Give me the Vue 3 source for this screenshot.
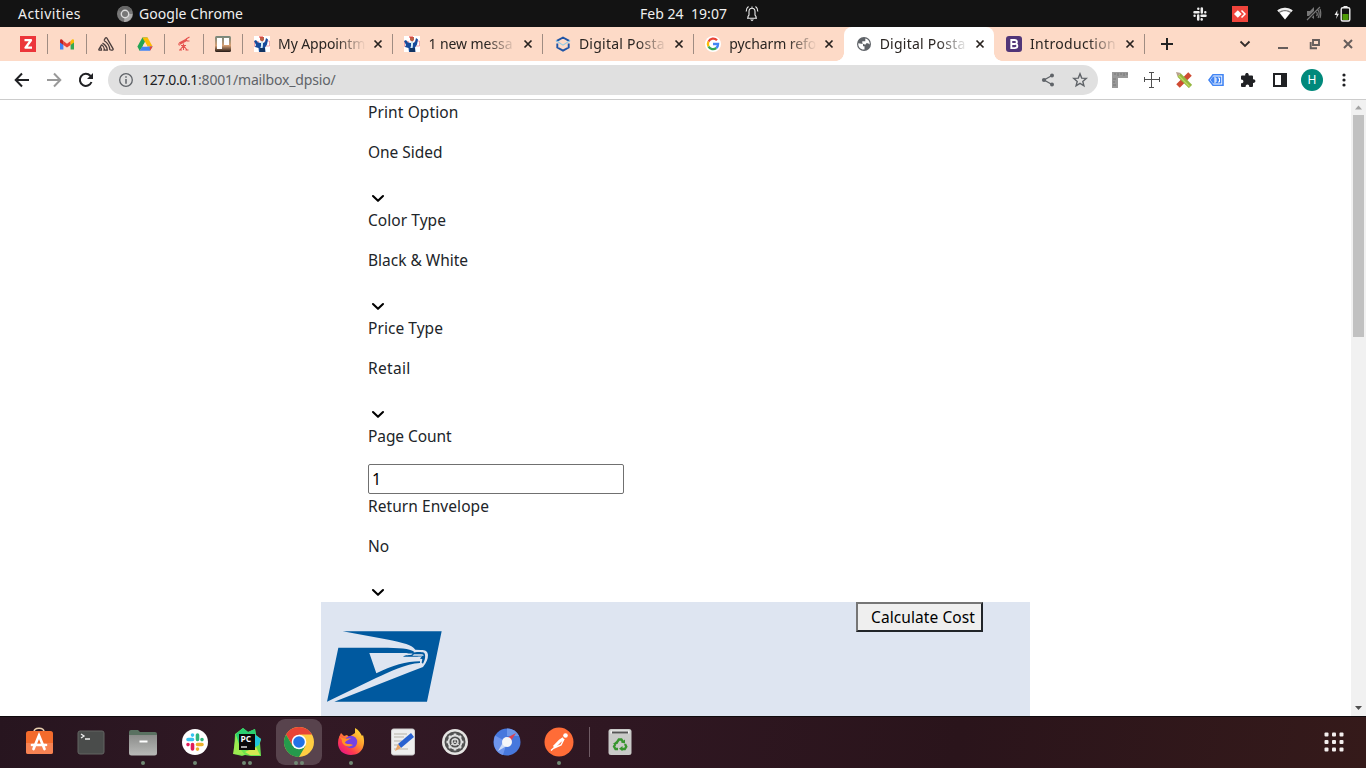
<script setup>
const pinned = ['z', 'gmail', 'sentry', 'drive', 'scope', 'trello']
const tabs = [
  { icon: 'eagle', text: 'My Appointm', w: 87 },
  { icon: 'eagle', text: '1 new messa', w: 84 },
  { icon: 'hex', text: 'Digital Posta', w: 86 },
  { icon: 'google', text: 'pycharm refo', w: 87 },
  { icon: 'globe', text: 'Digital Posta', w: 86, active: true },
  { icon: 'boot', text: 'Introduction', w: 86 },
]
const fields = [
  { label: 'Print Option', lw: 90.5, value: 'One Sided', vw: 74.5 },
  { label: 'Color Type', lw: 78, value: 'Black & White', vw: 100 },
  { label: 'Price Type', lw: 75, value: 'Retail', vw: 42.5 },
  { label: 'Page Count', lw: 83.5, input: '1' },
  { label: 'Return Envelope', lw: 121, value: 'No', vw: 21 },
]
const dock = [
  { id: 'store', dots: 0 }, { id: 'term', dots: 0 }, { id: 'files', dots: 1 }, { id: 'slack', dots: 1 },
  { id: 'pycharm', dots: 2 }, { id: 'chrome', dots: 2 }, { id: 'firefox', dots: 1 }, { id: 'editor', dots: 0 },
  { id: 'settings', dots: 0 }, { id: 'chromium', dots: 0 }, { id: 'postman', dots: 1 },
]
// Spreads a label's letters so that it fills the width it is given.
const vFit = {
  mounted(el, { value }) {
    const natural = el.getBoundingClientRect().width
    el.style.letterSpacing = (value - natural) / el.textContent.length + 'px'
  },
}
const teeth = [0, 45, 90, 135, 180, 225, 270, 315]
</script>

<template>
  <div class="screen">
    <header class="topbar">
      <span class="activities"><span v-fit="63">Activities</span></span>
      <svg class="app-ico" width="16" height="16" viewBox="0 0 16 16"><circle cx="8" cy="8" r="8" fill="#777"/><path d="M8 8 1 4A8 8 0 0 1 15 4z" fill="#666"/><path d="M8 8H15.5A8 8 0 0 1 7 16z" fill="#aaa"/><circle cx="8" cy="8" r="4.4" fill="#ddd"/><circle cx="8" cy="8" r="3" fill="#777"/></svg>
      <span class="app-name"><span v-fit="104">Google Chrome</span></span>
      <span class="clock"><span v-fit="87">Feb 24&nbsp; 19:07</span></span>
      <svg class="bell" width="14" height="17" viewBox="0 0 14 17" fill="none" stroke="#eee" stroke-width="1.1"><path d="M2 13.2h10M3 13V11.5L4 10V6.5C4 4.5 5 3.2 7 3.2s3 1.3 3 3.3V10l1 1.500V13M7 3V1.500M3.500 1.500C1.700 2.700 1.200 4.500 1.200 6.500M10.500 1.500c1.800 1.200 2.300 3 2.300 5"/><path d="M5 14.500h4L7 16.300z" fill="#eee" stroke="none"/></svg>
      <div class="tray">
        <svg width="14" height="14" viewBox="0 0 14 14" stroke="#eee" stroke-width="2.500" stroke-linecap="round"><path d="M5.300 1.700v.1M1.500 5.200h4M8.800 1.500v4M12.300 5.200v.1M8.700 12.300v.1M8.500 8.800h4M5.200 8.500v4M1.600 8.700v.1"/></svg>
        <svg class="t-any" width="16" height="16" viewBox="0 0 16 16"><path d="M0 0h16v16H0z" fill="#ef443b"/><path d="M5.800 4.200 9.600 8l-3.800 3.800L2 8z" fill="#fff"/><path d="m9.500 4.500 3.500 3.500-3.500 3.500" fill="none" stroke="#fff" stroke-width="1.500"/></svg>
        <svg class="t-wifi" width="16" height="13" viewBox="0 0 16 13"><path d="M.3 3.500C4.800-.3 11.200-.3 15.700 3.500L8 12.500z" fill="#777"/><path d="M.3 3.500C4.800-.3 11.200-.3 15.700 3.500L14.300 5.100C10.500 2.200 5.500 2.200 1.700 5.100z" fill="#eee"/><path d="M2.700 5.700C6 3.600 10 3.600 13.300 5.700L8 12.500z" fill="#fff"/></svg>
        <svg class="t-mute" width="16" height="15" viewBox="0 0 16 15"><path d="M1 5h3l4-4v12L4 10H1z" fill="#777"/><path d="M1 14 14 1" stroke="#131313" stroke-width="3"/><path d="M1 14 14 1M10.500 6c.9 1.300.9 3 0 4M12 4c1.500 2.500 1.500 5.500 0 8M14 3c1 3 1 6 0 9" fill="none" stroke="#777" stroke-width="1.200"/></svg>
        <svg class="t-bat" width="17" height="16" viewBox="0 0 17 16"><path d="m3.500 4-3 5h2.300L2 13l3-5.200H3.200z" fill="#eee"/><path d="M9.500 0h4v2h-4z" fill="#eee"/><rect x="7.200" y="1.700" width="8.600" height="13.300" rx="1.500" fill="none" stroke="#eee" stroke-width="1.400"/><path d="M8.500 8h6v6h-6z" fill="#4e9a06"/></svg>
      </div>
    </header>

    <nav class="tabstrip">
      <div v-for="p in pinned" :key="p" class="pin">
        <svg width="16" height="16" viewBox="0 0 16 16">
          <g v-if="p === 'z'"><path d="M0 0h16v16H0z" fill="#ec363b"/><path d="M4.500 4.200H11L5.500 11.700H12" fill="none" stroke="#fff" stroke-width="2.300" stroke-linejoin="round"/></g>
          <g v-else-if="p === 'gmail'"><path d="M1 4v9.500h3.400V7z" fill="#4285f4"/><path d="M11.600 7v6.500H15V4z" fill="#34a853"/><path d="M4.400 5v4L8 11.500 11.600 9V5L8 7.700z" fill="#ea4335"/><path d="M1 4.500v2l3.400 2.500V5L3 3.500Q1.200 2.700 1 4.500z" fill="#c5221f"/><path d="M15 4.500v2l-3.400 2.500V5L13 3.500q1.800-.8 2 1z" fill="#fbbc04"/></g>
          <g v-else-if="p === 'sentry'" fill="none" stroke="#493d3c" stroke-width="1.300"><path d="M6 4.500 7.300 2.200q.8-1 1.600 0l6.200 10.600q.3 1.200-.8 1.300H12.500M6 4.500q5.500 3.400 6 9.600M4.500 7.100q4.500 2.700 4.800 7H5.300M3.700 8.700l-2.900 4.700q-.1.700.7.700h2q.1-1.700-1.200-2.900M3.700 8.700q2.500 1.600 2.800 4.900"/></g>
          <g v-else-if="p === 'drive'"><path d="M5.400 1.500h5.200L5.300 11 2.700 15 .4 10.500z" fill="#23a455"/><path d="M5.400 1.500h5.200L15.600 10.500H10.500z" fill="#fbbc04"/><path d="M5.300 10.500h10.300L13 14.800H2.700z" fill="#4285f4"/><path d="m8 6 2.500 4.500h-5z" fill="#ffdfcd"/><path d="M12.600 10.500h3L13 14.800z" fill="#ea4335"/></g>
          <g v-else-if="p === 'scope'" stroke="#e5534f" fill="none"><path d="m3.500 7.700 7.500-4" stroke-width="2.600"/><path d="m10 3 3.500-2M11 5h2.500M2.500 7.500l1 2M7.500 7.500V14M7.500 9.500 4 14M7.500 9.500 11 14M3 14h3M9.500 14H12.500M5 9.500h5" stroke-width="1.100"/></g>
          <g v-else><defs><linearGradient id="trello" x2="0" y2="1"><stop offset="0" stop-color="#73877d"/><stop offset=".6" stop-color="#d49e72"/><stop offset="1" stop-color="#221815"/></linearGradient></defs><rect width="16" height="16" rx="1.500" fill="url(#trello)"/><path d="M2 2h5v11H2zM9 2h5v7H9z" fill="#fff"/></g>
        </svg>
      </div>
      <div v-for="(t, i) in tabs" :key="i" class="tab" :class="{ active: t.active, nosep: i === 3 || i === 4 }">
        <svg class="tab-ico" width="16" height="16" viewBox="0 0 16 16">
          <g v-if="t.icon === 'eagle'"><path d="M0 0h16v16H0z" fill="#fff"/><path d="M.5 5.500h4v5h-4zM11 5h4.500v5H11z" fill="#fff" stroke="#f28a91" stroke-width=".8"/><path d="m0 5 2-1 2 2.500 3 .5 1 3-1 6H5l-.5-4L1 11l1-2zM9 7l2-1 1-4 2 1.500-1 5-2 3 .5 4.500H8z" fill="#164b9b"/><path d="M6 1h4v3l-2 2-2-2z" fill="#ba6046"/><path d="M5 .5h4v1H5z" fill="#e33"/><path d="m7 5 2 1-1 6-2 1 1-3z" fill="#d4edf5"/><path d="M6 12h5v4H6z" fill="#113463"/></g>
          <g v-else-if="t.icon === 'hex'" fill="none"><path d="M2.300 5.500V4.600L8 1.500l5.700 3.100v.9M2.300 7.500v4L8 14.600l5.700-3.100v-4" stroke="#1f54a6" stroke-width="1.900"/><path d="m.8 4.500 7.200 4.600 7.200-4.600" stroke="#8ecbe9" stroke-width="1.100"/></g>
          <g v-else-if="t.icon === 'google'" fill="none" stroke-width="2.300"><circle cx="8" cy="8" r="8" fill="#fff"/><path d="M12 4.300A5.100 5.100 0 0 0 3.500 5.600" stroke="#ea4335"/><path d="M3.500 5.600a5.100 5.100 0 0 0 0 4.800" stroke="#fbbc05"/><path d="M3.500 10.400a5.100 5.100 0 0 0 7.800 1.600" stroke="#34a853"/><path d="M11.300 12A5.100 5.100 0 0 0 13.100 8H8" stroke="#4285f4"/></g>
          <g v-else-if="t.icon === 'globe'"><circle cx="8" cy="8" r="7" fill="#5f6368"/><path d="M2.300 7.300 7 8v2.300h1.500v3.200C5 14 1.800 11.300 2.300 7.300zM9.300 2.500C12 3 14 5.500 13.700 8.500L12 7.300H10.300L9.300 8.800 6.300 7.500V5.300h3z" fill="#fff"/></g>
          <g v-else><rect width="16" height="16" rx="3" fill="#513578"/><path d="M5.300 4h3.200c3.300 0 3 3.600.6 3.900 3.200.2 3 4.200-.2 4.200H5.300zM5.300 8H9" fill="none" stroke="#fff" stroke-width="1.900"/></g>
        </svg>
        <span class="tab-text"><span v-fit="t.w">{{ t.text }}</span></span>
        <svg class="close" width="16" height="16" viewBox="0 0 16 16"><path d="m4.500 4.500 7 7m0-7-7 7" stroke="#28221f" stroke-width="1.700"/></svg>
      </div>
      <svg class="plus" width="14" height="14" viewBox="0 0 14 14"><path d="M7 1v12M1 7h12" stroke="#222" stroke-width="2"/></svg>
      <div class="winctl">
        <svg width="12" height="12" viewBox="0 0 12 12"><path d="m1.500 3.500 4.500 4.500 4.500-4.500" fill="none" stroke="#322c2a" stroke-width="1.800"/></svg>
        <svg class="w-min" width="12" height="12" viewBox="0 0 12 12"><path d="M1 10h10" stroke="#665d5b" stroke-width="2"/></svg>
        <svg class="w-max" width="12" height="12" viewBox="0 0 12 12"><path d="M4 2h6v5H4zM1.700 4v6.300H8" fill="none" stroke="#665d5b" stroke-width="1.900"/></svg>
        <svg class="w-x" width="12" height="12" viewBox="0 0 12 12"><path d="m2 2 8 8m0-8-8 8" stroke="#665d5b" stroke-width="2"/></svg>
      </div>
    </nav>

    <div class="toolbar">
      <svg class="nav-i" width="16" height="16" viewBox="0 0 16 16"><path d="M15 8H2M8 1.500 1.700 8 8 14.500" fill="none" stroke="#202124" stroke-width="2"/></svg>
      <svg class="nav-i" width="16" height="16" viewBox="0 0 16 16"><path d="M1 8h13M8 1.500 14.300 8 8 14.500" fill="none" stroke="#999" stroke-width="2"/></svg>
      <svg class="nav-i" width="16" height="16" viewBox="0 0 16 16"><path d="M13.500 10A6 6 0 1 1 12.300 3.800L13.700 5.300" fill="none" stroke="#202124" stroke-width="2"/><path d="M15 1v6H9z" fill="#202124"/></svg>
      <div class="omnibox">
        <svg width="16" height="16" viewBox="0 0 16 16"><circle cx="8" cy="8" r="6.300" fill="none" stroke="#5f6368" stroke-width="1.300"/><path d="M8 7v4.700M8 4.200v1.600" stroke="#5f6368" stroke-width="1.500"/></svg>
        <span class="url"><span v-fit="56" class="host">127.0.0.1</span><span v-fit="137.5">:8001/mailbox_dpsio/</span></span>
        <svg class="share" width="14" height="14" viewBox="0 0 14 14"><path d="M11 2.500 3 7l8 4.500" fill="none" stroke="#5f6368" stroke-width="1.300"/><g fill="#5f6368"><circle cx="11" cy="2.500" r="2"/><circle cx="3" cy="7" r="2.100"/><circle cx="11" cy="11.500" r="2"/></g></svg>
        <svg class="star" width="16" height="16" viewBox="0 0 16 16"><path d="m8 1.800 1.700 4.300 4.600.3-3.500 3 1.100 4.400L8 11.400l-3.900 2.400 1.100-4.400-3.500-3 4.600-.3z" fill="none" stroke="#5f6368" stroke-width="1.400"/></svg>
      </div>
      <div class="exts">
        <svg width="16" height="16" viewBox="0 0 16 16"><path d="M0 0h16v6H6v10H0z" fill="#999"/><path d="M3 1v2M6 1v3M9 1v2M12 1v3M15 1v2M1 7h3M1 10h2M1 13h3" stroke="#777"/></svg>
        <svg width="16" height="16" viewBox="0 0 16 16"><path d="M7.500 1v14M1 7.500h14M5 .500h5M5 15.500h5M.5 5v5M15.500 5v5" stroke="#505050" stroke-width="1"/></svg>
        <svg width="16" height="16" viewBox="0 0 16 16"><path d="M14 2 2 14" stroke="#cf4b32" stroke-width="5"/><path d="m3 3 11.500 11.500" stroke="#94b640" stroke-width="4.600"/><path d="m2 3 11.500 11.500" stroke="#bfd85c" stroke-width="1.300"/><path d="m0 0 5 1-3.500 3.500z" fill="#b8a18d"/></svg>
        <svg width="16" height="16" viewBox="0 0 16 16"><path d="M5 2.700h10v10.600H5L1 8z" fill="#fff" stroke="#4285f4" stroke-width="1.600"/><path d="M5 4.500h8.300v7H5L2.500 8z" fill="#4285f4"/><path d="M6 6h2v4H6M8 8H6M10 6h1.500v4H10" fill="none" stroke="#fff"/></svg>
        <svg width="16" height="16" viewBox="0 0 16 16"><path d="M1 4.500Q1 3.500 2 3.500h3.200c-.5-3.300 4-3.300 3.500 0H12q1 0 1 1v2.800c3.200-.3 3.200 3.900 0 3.600V14q0 1-1 1H9.300c.2-3.200-3.900-3.200-3.700 0H2q-1 0-1-1v-2.800c3.200.2 3.200-3.800 0-3.600z" fill="#202124"/></svg>
        <svg width="16" height="16" viewBox="0 0 16 16"><path d="M2 2h12v12H2z" fill="none" stroke="#202124" stroke-width="2"/><path d="M9 2h5v12H9z" fill="#202124"/></svg>
      </div>
      <span class="avatar">H</span>
      <svg class="kebab" width="4" height="14" viewBox="0 0 4 14" fill="#202124"><circle cx="2" cy="2" r="1.600"/><circle cx="2" cy="7" r="1.600"/><circle cx="2" cy="12" r="1.600"/></svg>
    </div>

    <main class="viewport">
      <div class="page">
        <section class="form">
          <div v-for="f in fields" :key="f.label" class="field">
            <p class="label"><span v-fit="f.lw">{{ f.label }}</span></p>
            <input v-if="f.input" class="count" type="text" :value="f.input" />
            <template v-else>
              <p class="value"><span v-fit="f.vw">{{ f.value }}</span></p>
              <svg class="chev" width="20" height="20" viewBox="0 0 20 20"><path d="m5 8 5 4.800L15 8" fill="none" stroke="#000" stroke-width="2.100" stroke-linecap="round" stroke-linejoin="round"/></svg>
            </template>
          </div>
        </section>
        <section class="result">
          <svg class="logo" width="116.670" height="72.670" viewBox="50 118 350 218">
            <g fill="#00599f">
              <path d="M100 122H397L353 333H75L300 245 341 229C352 216 356 205 356 193 355 181 348 178 335 178L318 177C308 163 285 157 230 146z"/>
              <path d="M87 171H235C285 172 310 176 315 185 310 190 302 189 291 187L180 187 201 248C250 224 290 212 332 212L332 217C290 219 240 244 200 262L53 333z"/>
              <path d="M309 187C320 183 337 184 344 186 350 192 348 206 341 219L337 216 339 205 332 204 338 197C325 199 315 198 281 198 289 192 301 195 309 191z"/>
            </g>
            <path d="M314 191h23q6 0 6 4H309z" fill="#dfe6f1"/>
          </svg>
          <button class="calc"><span v-fit="104">Calculate Cost</span></button>
        </section>
      </div>
      <div class="scroll">
        <svg width="15" height="15" viewBox="0 0 15 15"><path d="m4 9.500 3.500-4 3.500 4z" fill="#a3a3a3"/></svg>
        <div class="thumb"></div>
        <svg class="down" width="15" height="15" viewBox="0 0 15 15"><path d="m4 5 3.500 4L11 5z" fill="#505050"/></svg>
      </div>
    </main>

    <footer class="dock">
      <div v-for="d in dock" :key="d.id" class="app" :class="{ current: d.id === 'chrome' }">
        <svg width="32" height="32" viewBox="0 0 32 32">
          <g v-if="d.id === 'store'"><path d="M11 6c0-5 10-5 10 0" fill="none" stroke="#ead1b0" stroke-width="1.500"/><rect x="3" y="5" width="27" height="23" rx="2.500" fill="#f36b2c"/><path d="M3 17h27v9q0 2-2 2H5q-2 0-2-2z" fill="#f78353"/><path d="M10.500 23 16 9.500 21.500 23M9 19h14" fill="none" stroke="#fff" stroke-width="2.700" stroke-linecap="round"/></g>
          <g v-else-if="d.id === 'term'"><rect x="3" y="5" width="26" height="23" rx="2" fill="#4a4c4b" stroke="#626462"/><path d="m6 8 3 2-3 2M10 13h5" fill="none" stroke="#eee" stroke-width="1.300"/></g>
          <g v-else-if="d.id === 'files'"><path d="M2 26V6q0-2 2-2h7l2 2h15q2 0 2 2v17z" fill="#5a7161"/><defs><linearGradient id="fold" x2="0" y2="1"><stop stop-color="#8b8c8a"/><stop offset="1" stop-color="#b9bab8"/></linearGradient></defs><path d="M2 9h28v18q0 2.500-2.500 2.500h-23Q2 29.500 2 27z" fill="url(#fold)"/><path d="M12.500 15.500h8" stroke="#fff" stroke-width="2"/></g>
          <g v-else-if="d.id === 'slack'" stroke-width="3.600" stroke-linecap="round"><circle cx="16" cy="16" r="13" fill="#fff"/><path d="M13.500 9v.1M9 13.500h4.500" stroke="#36c5f0"/><path d="M18.500 9v4.500M23 13.500v.1" stroke="#2eb67d"/><path d="M18.500 18.500H23M18.500 23v.1" stroke="#ecb22e"/><path d="M13.500 18.500V23M9 18.500v.1" stroke="#e01e5a"/></g>
          <g v-else-if="d.id === 'pycharm'"><path d="M4 8 12 2l5 4 7-3 1 6 5 4-1 4 1 13H20l-6-1-3 1-8-2z" fill="#6be34e"/><path d="m12 2 5 4 7-3 1 6v14H4l1-15z" fill="#2bcf70"/><path d="m24 9 6 4-2 6-4 2z" fill="#20c7df"/><path d="M2 28 5 9l5 15 4 5z" fill="#9cea50"/><path d="m25 21 4 8H19l-5-3z" fill="#d5e852"/><path d="M8 8h16v16H8z" fill="#090909"/><text x="9.400" y="16" class="pc">PC</text><path d="M10 21h6" stroke="#fff" stroke-width="1.300"/></g>
          <g v-else-if="d.id === 'chrome'"><circle cx="16" cy="16" r="15" fill="#ffcd42"/><path d="M3 8.500A15 15 0 0 1 29 8.500H16L9.500 19.800z" fill="#e84335"/><path d="M3 8.500A15 15 0 0 0 16 31l6.500-11.200H9.500z" fill="#259a4c"/><circle cx="16" cy="16" r="7.300" fill="#fff"/><circle cx="16" cy="16" r="5.800" fill="#2272e5"/></g>
          <g v-else-if="d.id === 'firefox'"><defs><linearGradient id="ff" x1="1" x2=".2" y2="1"><stop stop-color="#fff03d"/><stop offset=".45" stop-color="#ff982d"/><stop offset=".75" stop-color="#ff3b4f"/><stop offset="1" stop-color="#e31587"/></linearGradient></defs><path d="M3 17C3 12 5 9 6 7l3 3 3-1 2 2 6-4V2c4 2 6 6 7 8l1-1c3 9 0 20-12 20C8 29 3 24 3 17z" fill="url(#ff)"/><circle cx="16" cy="16" r="6.200" fill="#7542e5"/><path d="M4 10q4 4 12 2c-2 2-6 3-6 5 3 2 5 0 8 2-6 4-12-1-11-5z" fill="#ff9226"/></g>
          <g v-else-if="d.id === 'editor'"><rect x="4.500" y="3" width="23" height="26" rx="2" fill="#eee" stroke="#ccc"/><path d="M7 8h13M7 11h10M7 15h8M7 19h6M7 23h14" stroke="#b7b3a8"/><path d="m11 18 13-11 3 4-13 11z" fill="#2861d0"/><path d="m11 18 3 4-6 3z" fill="#e8a466"/></g>
          <g v-else-if="d.id === 'settings'" fill="none"><circle cx="16" cy="16" r="13" fill="#e5e4e2"/><circle cx="16" cy="16" r="10.500" fill="#515151"/><circle cx="16" cy="16" r="6.500" stroke="#ddd" stroke-width="1.800"/><path v-for="a in teeth" :key="a" d="M16 7.500v2.500" :transform="`rotate(${a} 16 16)`" stroke="#ddd" stroke-width="2.600"/><circle cx="16" cy="16" r="3" stroke="#ddd" stroke-width="1.400"/><path d="M16 16v-4M16 16l4 3M16 16l-4 3" stroke="#ddd"/></g>
          <g v-else-if="d.id === 'chromium'"><circle cx="16" cy="16" r="13.500" fill="#4778dd"/><path d="M16 2.500A13.500 13.500 0 0 1 28 10H16z" fill="#6d97ea"/><path d="M4 9.500 16 16 12 29C4 27 1 18 4 9.500z" fill="#6f96ec"/><path d="m25 7-7 11-4-5z" fill="#db4354"/><path d="m7 25 7-12 5 5z" fill="#cddcf8"/><circle cx="16" cy="16" r="5" fill="#f5f6f8"/></g>
          <g v-else><circle cx="16" cy="16" r="14.500" fill="#ff6c37"/><path d="m11 21 6-6 3.500-2.500" fill="none" stroke="#fff" stroke-width="3"/><path d="m8 24.500 5-4.500M11 22l7-3 3-6" fill="none" stroke="#fff" stroke-width="1.400"/><circle cx="22.500" cy="9.500" r="2.300" fill="#fff"/></g>
        </svg>
        <div class="dots"><i v-for="n in d.dots" :key="n"></i></div>
      </div>
      <div class="sep"></div>
      <svg class="trash" width="32" height="32" viewBox="0 0 32 32"><rect x="4.500" y="3" width="23" height="26" rx="2.500" fill="#c9cac8"/><path d="M6.500 4.500h19v3h-19z" fill="#eee"/><path d="M8 5.500h16v2H8z" fill="#555"/><path d="m12.500 17 2.300-3.500h2.600l1.700 2.500M21 18l1.300 2.600-1.500 2.400H17M14 23h-2.500L10 20.500l1.500-2.500" fill="none" stroke="#36952e" stroke-width="2.300"/><path d="m17 16.500 4 1v-4zM18.500 20v5L15 22.700zM8.800 18h5l-1.500-2.800z" fill="#36952e"/></svg>
      <svg class="grid" width="20" height="20" viewBox="0 0 20 20" fill="#f3efee"><template v-for="y in 3" :key="y"><rect v-for="x in 3" :key="x" :x="x * 7.500 - 7" :y="y * 7.500 - 7" width="4" height="4" rx="1"/></template></svg>
    </footer>
  </div>
</template>

<style>
body { margin: 0; background: #fff; overflow: hidden; }
</style>
<style scoped>
.screen { width: 1366px; height: 768px; display: flex; flex-direction: column; overflow: hidden; font-family: "Noto Sans", "Open Sans", sans-serif; color: #212529; }
svg { display: block; flex: none; }
span { white-space: nowrap; }
.topbar { height: 27px; flex: none; background: #131313; color: #efefef; display: flex; align-items: center; font-size: 14px; line-height: 26px; }
.activities { margin-left: 18px; width: 99px; }
.app-name { margin-left: 6px; width: 501px; }
.clock { width: 105px; }
.tray { display: flex; align-items: center; margin-left: 434px; }
.t-any { margin-left: 25px; }
.t-wifi { margin-left: 29px; }
.t-mute { margin-left: 13px; }
.t-bat { margin-left: 12px; }
.tabstrip { height: 34px; flex: none; background: #fddac7; display: flex; align-items: center; padding-left: 8.500px; }
.pin { width: 39px; height: 20px; box-sizing: border-box; border-right: 1px solid #9f8c82; display: flex; align-items: center; padding-left: 11.500px; flex: none; }
.tab { width: 150.400px; height: 34px; flex: none; display: flex; align-items: center; padding-left: 11.600px; box-sizing: border-box; position: relative; }
.tab::after { content: ""; position: absolute; right: 0; top: 7px; width: 1px; height: 20px; background: #9f8c82; }
.nosep::after { display: none; }
.active { background: #fff; border-radius: 8px 8px 0 0; }
.active::before { content: ""; position: absolute; left: -8px; right: -8px; bottom: 0; height: 8px; background: radial-gradient(circle at 0 0, transparent 7.500px, #fff 8px) left / 8px 8px no-repeat, radial-gradient(circle at 100% 0, transparent 7.500px, #fff 8px) right / 8px 8px no-repeat; }
.tab-text { margin-left: 8px; width: 88px; font-size: 14px; line-height: 32px; color: #2a2522; -webkit-mask-image: linear-gradient(90deg, #000 66%, transparent 100%); mask-image: linear-gradient(90deg, #000 66%, transparent 100%); }
.close { margin-left: 4px; }
.plus { margin-left: 15px; }
.winctl { display: flex; margin-left: auto; padding-right: 12px; }
.w-min { margin-left: 26px; }
.w-max { margin-left: 20px; }
.w-x { margin-left: 21px; }
.toolbar { height: 39px; flex: none; box-sizing: border-box; border-bottom: 1px solid #ccc; display: flex; align-items: center; padding-left: 14px; }
.nav-i { margin-right: 16px; }
.nav-i:nth-child(3) { margin-right: 14px; }
.omnibox { width: 990px; height: 30px; border-radius: 15px; background: #e0e0e0; display: flex; align-items: center; padding-left: 10px; box-sizing: border-box; flex: none; }
.url { margin-left: 8px; width: 899px; display: flex; font-size: 14px; line-height: 28px; color: #5f6368; }
.host { color: #202124; }
.star { margin-left: 17px; }
.exts { display: flex; gap: 16px; margin-left: 14px; }
.avatar { width: 22px; height: 22px; border-radius: 50%; background: #00897b; color: #fff; font-size: 12px; line-height: 22px; text-align: center; margin-left: 13px; }
.kebab { margin-left: 19px; }
.viewport { height: 616px; flex: none; display: flex; overflow: hidden; }
.page { width: 709px; margin-left: 321px; height: 616px; font-size: 16px; }
.form { padding-left: 47px; height: 502px; }
p { margin: 0 0 16px; line-height: 24px; }
.label span, .value span, .calc span { font-size: 15.500px; }
.chev { margin-top: 24px; }
.count { display: block; width: 256px; height: 30px; box-sizing: border-box; border: 1px solid #707070; border-radius: 2px; padding: 1px 3px; font: 16px "Noto Sans", sans-serif; color: #000; background: #fff; outline: none; }
.result { height: 114px; background: #dee5f1; display: flex; align-items: flex-start; }
.logo { margin: 28px 0 0 5.300px; }
.calc { margin-left: auto; margin-right: 47px; width: 127px; height: 30px; background: #efefef; border: 2px solid; border-color: #767676 #212529 #212529 #767676; padding: 0 0 0 13px; font-family: inherit; font-size: 16px; line-height: 24px; color: #000; text-align: left; }
.scroll { width: 15px; height: 616px; background: #f1f1f1; margin-left: auto; display: flex; flex-direction: column; }
.thumb { width: 11px; height: 222px; margin-left: 2px; background: #c1c1c1; }
.down { margin-top: auto; }
.dock { height: 52px; flex: none; box-sizing: border-box; border-top: 1px solid #100a0d; background: linear-gradient(100deg, #27151f 0, #321925 22%, #2f1722 45%, #2a141b 70%, #351a1a 100%); display: flex; align-items: center; padding: 0 0 1px 16px; }
.app { width: 46px; height: 46px; margin-right: 6px; border-radius: 9px; position: relative; display: flex; align-items: center; justify-content: center; flex: none; }
.current { background: #58434d; }
.dots { position: absolute; left: 0; right: 0; bottom: 0; display: flex; gap: 2px; justify-content: center; }
.dots i { width: 4px; height: 4px; border-radius: 50%; background: #708873; }
.pc { font: bold 8.500px "Open Sans", sans-serif; fill: #fff; }
.sep { width: 1px; height: 30px; background: #705c65; margin-left: 1px; }
.trash { margin-left: 14px; }
.grid { margin-left: auto; margin-right: 22px; }
</style>
